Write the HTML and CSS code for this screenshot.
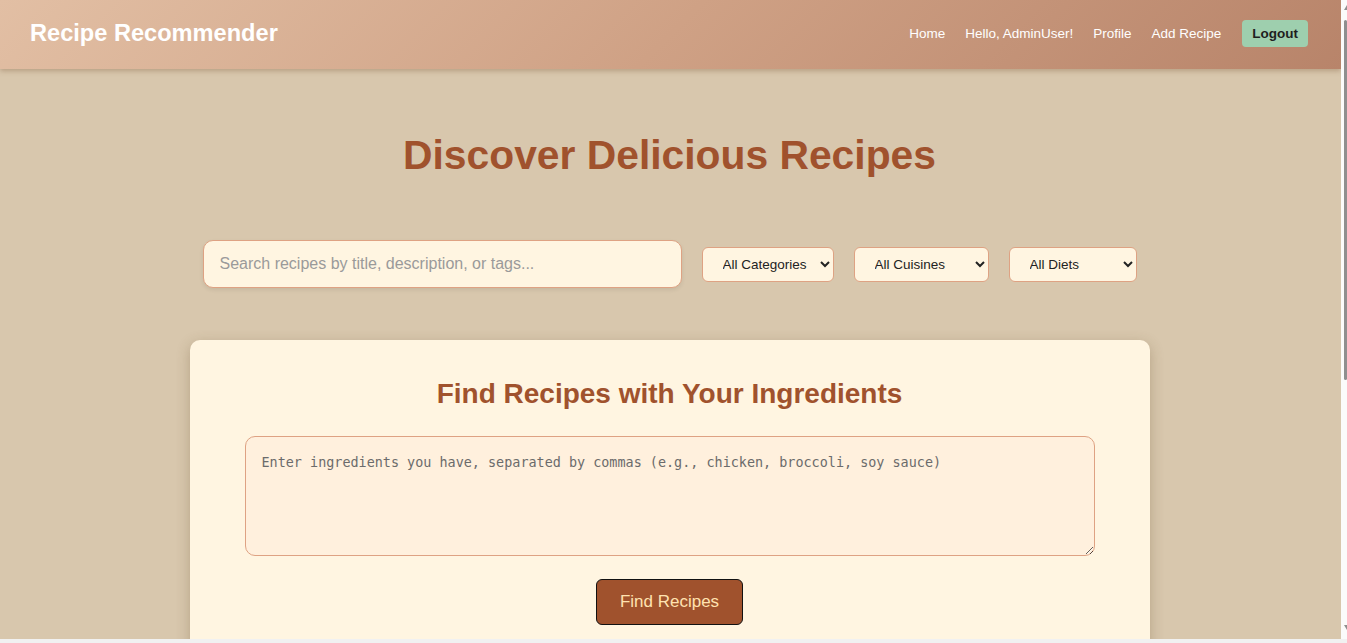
FILE: index.html
```html
<!DOCTYPE html>
<html lang="en">
<head>
<meta charset="utf-8">
<title>Recipe Recommender</title>
<link rel="stylesheet" href="styles.css">
</head>
<body>
<header class="site-header">
  <div class="brand">Recipe Recommender</div>
  <nav class="nav">
    <a class="nav-link" href="#">Home</a>
    <span class="nav-link">Hello, AdminUser!</span>
    <a class="nav-link" href="#">Profile</a>
    <a class="nav-link" href="#">Add Recipe</a>
    <button class="logout-btn" type="button">Logout</button>
  </nav>
</header>
<main class="main">
  <h1 class="page-title">Discover Delicious Recipes</h1>
  <div class="search-row">
    <input class="search-input" type="text" placeholder="Search recipes by title, description, or tags...">
    <select class="filter-select sel-cat"><option>All Categories</option></select>
    <select class="filter-select sel-cui"><option>All Cuisines</option></select>
    <select class="filter-select sel-diet"><option>All Diets</option></select>
  </div>
  <section class="ingredient-card">
    <h2 class="card-title">Find Recipes with Your Ingredients</h2>
    <textarea class="ingredient-input" placeholder="Enter ingredients you have, separated by commas (e.g., chicken, broccoli, soy sauce)"></textarea>
    <button class="find-btn" type="button">Find Recipes</button>
  </section>
  <div class="spacer"></div>
</main>
<div class="fake-scrollbar" aria-hidden="true">
  <span class="sb-arrow sb-up"></span>
  <span class="sb-thumb"></span>
  <span class="sb-arrow sb-down"></span>
</div>
<div class="window-edge" aria-hidden="true"></div>
</body>
</html>
```
FILE: styles.css
```css
* { box-sizing: border-box; }
html, body { margin: 0; padding: 0; }
html { overflow: hidden; }
body {
  font-family: "Liberation Sans", Arial, sans-serif;
  background: #d8c7ad;
  color: #333;
  padding-right: 6px;
}
.site-header {
  height: 69px;
  display: flex;
  align-items: center;
  justify-content: space-between;
  padding: 0 33px 2px 30px;
  background: linear-gradient(135deg, #e2bfa4 0%, #cfa185 50%, #b8846a 100%);
  box-shadow: 0 2px 5px rgba(120, 80, 50, 0.35);
  position: relative;
}
.brand {
  color: #fff;
  font-weight: bold;
  font-size: 23.6px;
}
.nav {
  display: flex;
  align-items: center;
  gap: 20px;
}
.nav-link {
  color: #fff;
  text-decoration: none;
  font-size: 13.5px;
}
.logout-btn {
  margin-left: 1px;
  height: 27px;
  padding: 0 10px;
  border: none;
  border-radius: 4px;
  background: #9ecfae;
  color: #1e1e1e;
  font-family: "Liberation Sans", Arial, sans-serif;
  font-weight: bold;
  font-size: 13.5px;
}
.main {
  display: flex;
  flex-direction: column;
  align-items: center;
  padding-right: 2px;
}
.page-title {
  margin: 61px 0 0;
  font-size: 40.8px;
  line-height: 50px;
  color: #a0522d;
  font-weight: bold;
}
.search-row {
  margin-top: 60px;
  display: flex;
  align-items: center;
  gap: 20px;
}
.search-input {
  width: 479px;
  height: 48px;
  padding: 0 16px;
  border: 1px solid #dea283;
  border-radius: 10px;
  background: #fff5e1;
  font-family: "Liberation Sans", Arial, sans-serif;
  font-size: 16px;
  box-shadow: 0 2px 4px rgba(0, 0, 0, 0.08);
}
.search-input::placeholder { color: #9a9a9a; }
.filter-select {
  height: 35px;
  padding: 0 8px 0 16px;
  border: 1px solid #dea283;
  border-radius: 6px;
  background: #fff5e1;
  font-family: "Liberation Sans", Arial, sans-serif;
  font-size: 13.5px;
  color: #222;
}
.sel-cat { width: 132px; }
.sel-cui { width: 135px; }
.sel-diet { width: 128px; }
.ingredient-card {
  margin-top: 52px;
  width: 960px;
  background: #fff5e1;
  border-radius: 10px;
  box-shadow: 0 4px 14px rgba(100, 75, 40, 0.3);
  display: flex;
  flex-direction: column;
  align-items: center;
  padding: 36px 0 40px;
}
.card-title {
  margin: 0;
  font-size: 28px;
  line-height: 36px;
  color: #a0522d;
}
.ingredient-input {
  margin-top: 24px;
  width: 850px;
  height: 120px;
  padding: 18px 16px;
  border: 1px solid #dea283;
  border-radius: 10px;
  background: #fff0dd;
  font-family: "DejaVu Sans Mono", "Liberation Mono", monospace;
  font-size: 13.45px;
  resize: vertical;
}
.ingredient-input::placeholder { color: #6b6b6b; }
.find-btn {
  margin-top: 23px;
  width: 147px;
  height: 46px;
  border: 1px solid #111;
  border-radius: 6px;
  background: #a0522d;
  color: #ffe2b0;
  font-family: "Liberation Sans", Arial, sans-serif;
  font-size: 17px;
}
.spacer { height: 120px; }
.fake-scrollbar {
  position: fixed;
  top: 0;
  right: 0;
  width: 6px;
  height: 639px;
  background: #fbfbfb;
}
.sb-thumb {
  position: absolute;
  top: 20px;
  right: 0;
  width: 3px;
  height: 360px;
  background: #8f8f8f;
  border-radius: 2px;
}
.sb-arrow {
  position: absolute;
  right: 0;
  width: 0;
  height: 0;
  border-left: 3px solid transparent;
  border-right: 0 solid transparent;
}
.sb-up { top: 5px; border-bottom: 5px solid #8f8f8f; }
.sb-down { bottom: 9px; border-top: 5px solid #8f8f8f; }
.window-edge {
  position: fixed;
  left: 0;
  right: 0;
  bottom: 0;
  height: 4px;
  background: #f1f1f1;
}
```
